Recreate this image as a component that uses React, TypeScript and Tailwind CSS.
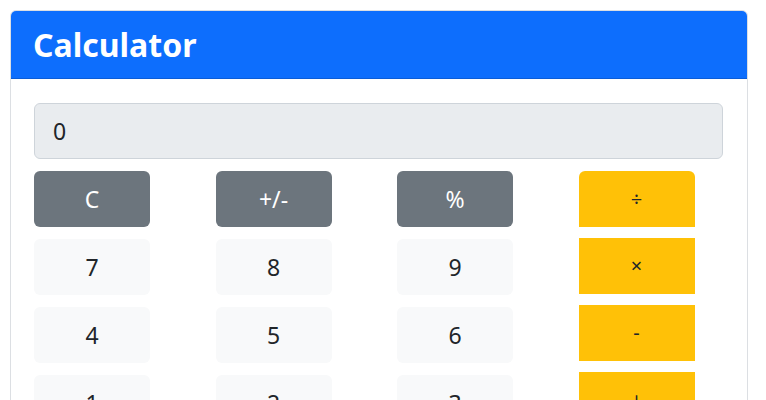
import React from 'react';

const font = { fontFamily: '"Noto Sans", "Open Sans", sans-serif' };

const rows: { keys: string[]; tone: 'dark' | 'light' }[] = [
  { keys: ['C', '+/-', '%'], tone: 'dark' },
  { keys: ['7', '8', '9'], tone: 'light' },
  { keys: ['4', '5', '6'], tone: 'light' },
  { keys: ['1', '2', '3'], tone: 'light' },
];

const ops = ['÷', '×', '-', '+'];

export default function App() {
  return (
    <div className="min-h-[400px] bg-white p-[10px] overflow-hidden" style={font}>
      <div className="w-[738px] rounded-md border border-[#dcdfe3] bg-white overflow-hidden">
        {/* header */}
        <div className="h-[68px] flex items-center pl-[22px] bg-[#0d6efd] border-b border-black/15">
          <h1 className="text-[32px] font-bold text-white leading-tight">Calculator</h1>
        </div>

        <div className="pl-[23px] pr-6 pt-6 pb-6">
          <div className="h-[56px] flex items-center px-[18px] rounded-md border border-[#ced4da] bg-[#e9ecef] text-[23px] text-[#212529]">
            0
          </div>

          <div className="mt-3 flex">
            <div className="grid grid-cols-[repeat(3,116px)] gap-x-[65.5px] gap-y-3">
              {rows.map((r) =>
                r.keys.map((k) => (
                  <button
                    key={k}
                    className={
                      r.tone === 'dark'
                        ? 'h-[56px] rounded-md bg-[#6c757d] text-white text-[23px]'
                        : 'h-[56px] rounded-md bg-[#f8f9fa] text-[#212529] text-[23px]'
                    }
                  >
                    {k}
                  </button>
                ))
              )}
            </div>
            <div className="ml-[65.5px] flex flex-col gap-[11px]">
              {ops.map((o, i) => (
                <button
                  key={o}
                  className={
                    'w-[116px] h-[56px] bg-[#ffc107] text-[#212529] text-[20px] ' +
                    (i === 0 ? 'rounded-t-md' : '')
                  }
                >
                  {o}
                </button>
              ))}
            </div>
          </div>
        </div>
      </div>
    </div>
  );
}
